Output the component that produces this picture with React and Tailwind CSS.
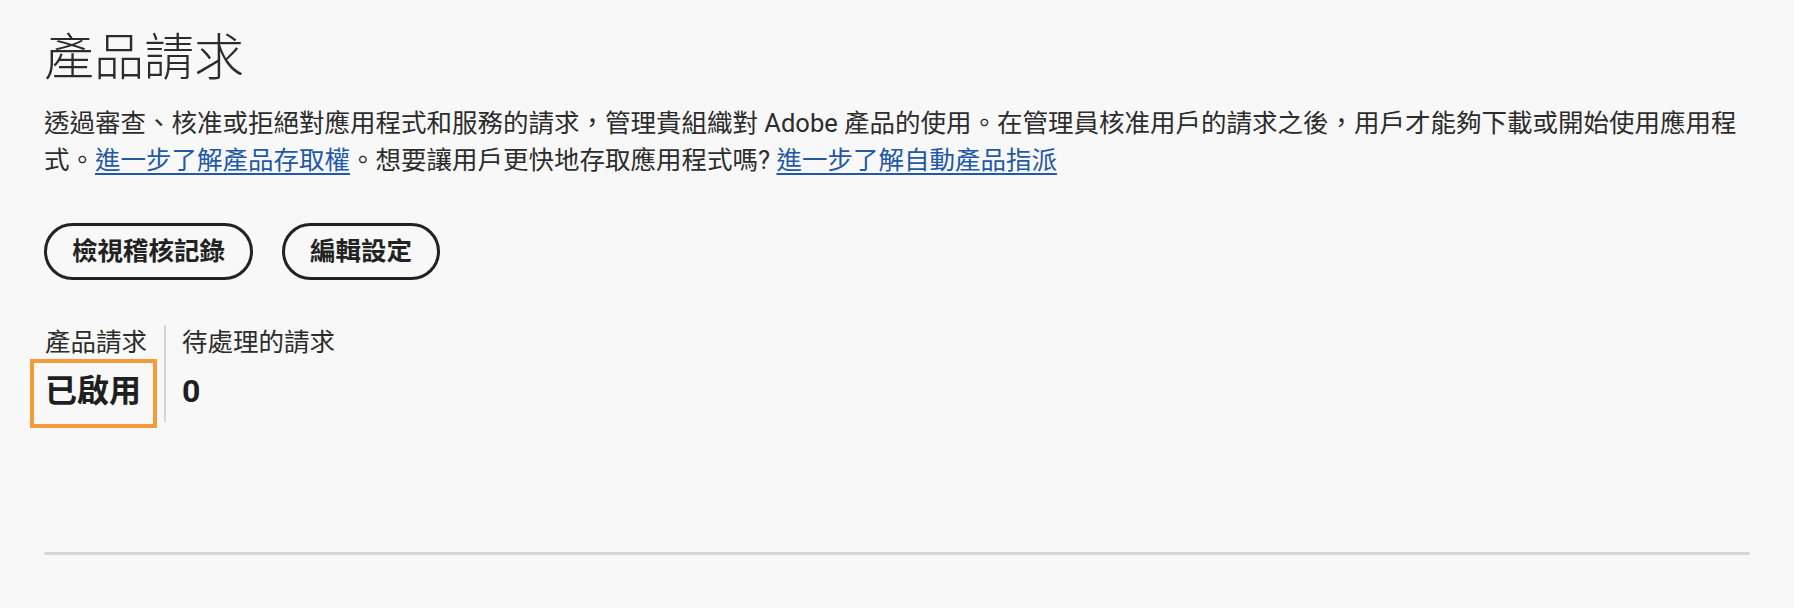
import React from "react";

const FONT = "font-['Roboto','Noto_Sans_CJK_TC',sans-serif]";

const Stat = ({ label, value, highlight, className }) => (
  <div className={`flex flex-col ${className}`}>
    <div className="text-[25.5px] leading-[35px] text-[#2c2c2c]">{label}</div>
    <div className="relative text-[32px] leading-[62px] font-bold text-[#1f1f1f]">
      {value}
      {highlight && (
        <span className="absolute left-[-15px] top-[-1px] w-[127px] h-[69px] border-4 border-[#f29b38] pointer-events-none" />
      )}
    </div>
  </div>
);

export default function App() {
  return (
    <div className={`min-h-[608px] w-full bg-[#f8f8f8] ${FONT}`}>
      <div className="px-[44px] pt-[28px]">
        <h1 className="text-[50px] leading-[60px] font-light text-[#2c2c2c]">產品請求</h1>

        <p className="mt-[17px] max-w-[1700px] text-[25.5px] leading-[37px] text-[#2c2c2c]">
          透過審查、核准或拒絕對應用程式和服務的請求，管理貴組織對 Adobe 產品的使用。在管理員核准用戶的請求之後，用戶才能夠下載或開始使用應用程式。
          <a href="#" className="text-[#2358a6] underline underline-offset-[4px]">進一步了解產品存取權</a>
          。想要讓用戶更快地存取應用程式嗎?{" "}
          <a href="#" className="text-[#2358a6] underline underline-offset-[4px]">進一步了解自動產品指派</a>
        </p>

        <div className="mt-[44px] flex gap-[29px]">
          <button className="h-[57px] rounded-full border-[3px] border-[#222222] px-[25px] text-[25.5px] font-bold text-[#222222]">
            檢視稽核記錄
          </button>
          <button className="h-[57px] rounded-full border-[3px] border-[#222222] px-[25px] text-[25.5px] font-bold text-[#222222]">
            編輯設定
          </button>
        </div>

        <div className="mt-[45px] flex">
          <Stat label="產品請求" value="已啟用" highlight className="pl-[1px] pr-[17px] border-r-2 border-[#d6d6d6]" />
          <Stat label="待處理的請求" value="0" className="pl-[16px]" />
        </div>

        <div className="mt-[130px] h-[3px] rounded-full bg-[#d5d5d5]" />
      </div>
    </div>
  );
}
